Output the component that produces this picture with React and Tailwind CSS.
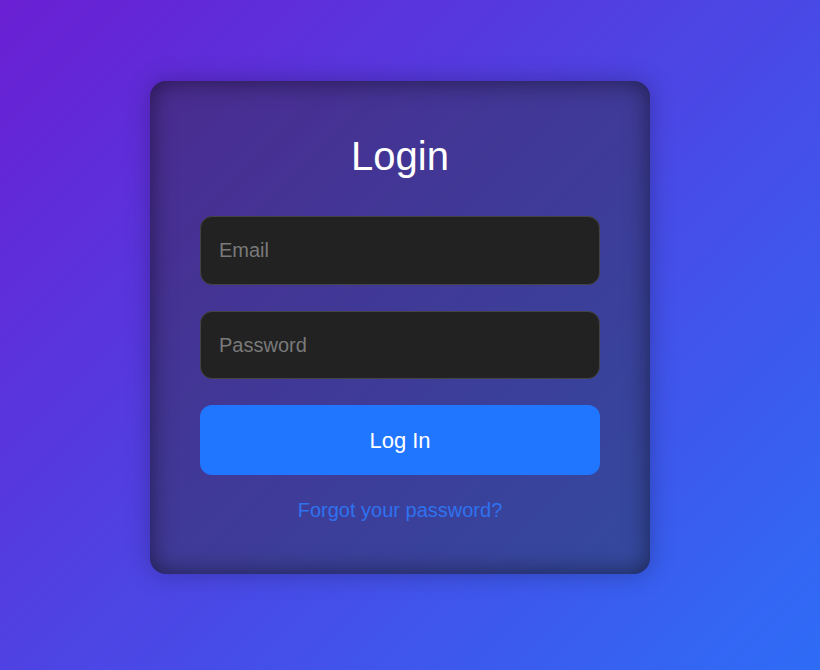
export default function App() {
    return (
        <div className="min-h-screen w-full bg-[linear-gradient(135deg,#6a1fd3_0%,#2e6cf6_100%)] flex justify-center pr-[20px] pt-[81px] font-['Liberation_Sans',Arial,sans-serif]">
            <div className="w-[500px] h-[493px] rounded-2xl bg-[rgba(45,45,45,0.42)] shadow-[inset_0_0_24px_rgba(0,0,0,0.5),0_0_24px_rgba(0,0,0,0.25)] px-[50px] pt-[52px] flex flex-col">
                <h1 className="text-white text-[40px] leading-[46px] text-center">Login</h1>

                <input
                    type="email"
                    placeholder="Email"
                    className="mt-[37px] h-[69px] w-full rounded-xl bg-[#222222] border border-[#444444] px-[18px] text-[20px] text-white placeholder:text-[#7a7a7a] outline-none"
                />
                <input
                    type="password"
                    placeholder="Password"
                    className="mt-[26px] h-[68px] w-full rounded-xl bg-[#222222] border border-[#444444] px-[18px] text-[20px] text-white placeholder:text-[#7a7a7a] outline-none"
                />

                <button className="mt-[26px] h-[70px] w-full rounded-xl bg-[#2176ff] text-white text-[22px]">
                    Log In
                </button>

                <a href="#" className="mt-[20px] text-center text-[20px] text-[#2f72f0]">
                    Forgot your password?
                </a>
            </div>
        </div>
    )
}
